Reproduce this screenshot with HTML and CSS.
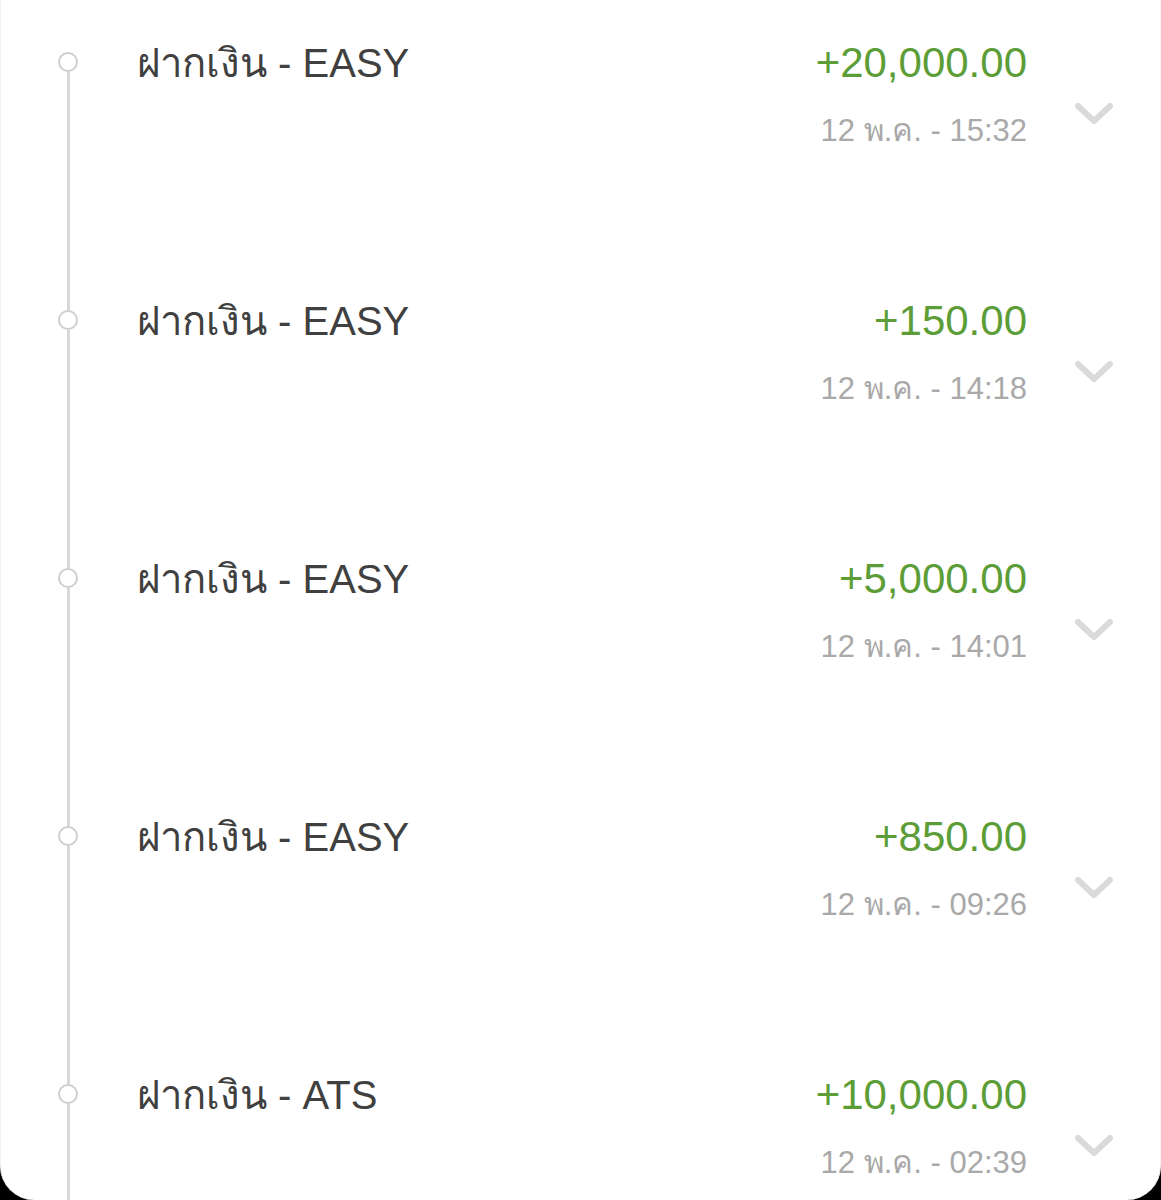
FILE: index.html
```html
<!DOCTYPE html>
<html lang="th">
<head>
    <meta charset="UTF-8">
    <meta name="viewport" content="width=device-width, initial-scale=1.0">
    <title>รายการเดินบัญชี</title>
    <link rel="stylesheet" href="styles.css">
</head>
<body>

    <div class="card">
        <!-- รายการฝากเงิน -->
        <ul class="tx-list">
            <li class="tx">
                <div class="tx-rail"><span class="tx-line tx-line-top"></span><span class="tx-dot"></span><span class="tx-line"></span></div>
                <div class="tx-title">ฝากเงิน - EASY</div>
                <div class="tx-money">
                    <div class="tx-amount">+20,000.00</div>
                    <div class="tx-date">12 พ.ค. - 15:32</div>
                </div>
                <div class="tx-toggle"><svg viewBox="0 0 40 26" width="40" height="26"><path d="M4 5 L20 20 L36 5" fill="none" stroke="#dadada" stroke-width="6" stroke-linecap="round" stroke-linejoin="round"/></svg></div>
            </li>
            <li class="tx">
                <div class="tx-rail"><span class="tx-line tx-line-top"></span><span class="tx-dot"></span><span class="tx-line"></span></div>
                <div class="tx-title">ฝากเงิน - EASY</div>
                <div class="tx-money">
                    <div class="tx-amount">+150.00</div>
                    <div class="tx-date">12 พ.ค. - 14:18</div>
                </div>
                <div class="tx-toggle"><svg viewBox="0 0 40 26" width="40" height="26"><path d="M4 5 L20 20 L36 5" fill="none" stroke="#dadada" stroke-width="6" stroke-linecap="round" stroke-linejoin="round"/></svg></div>
            </li>
            <li class="tx">
                <div class="tx-rail"><span class="tx-line tx-line-top"></span><span class="tx-dot"></span><span class="tx-line"></span></div>
                <div class="tx-title">ฝากเงิน - EASY</div>
                <div class="tx-money">
                    <div class="tx-amount">+5,000.00</div>
                    <div class="tx-date">12 พ.ค. - 14:01</div>
                </div>
                <div class="tx-toggle"><svg viewBox="0 0 40 26" width="40" height="26"><path d="M4 5 L20 20 L36 5" fill="none" stroke="#dadada" stroke-width="6" stroke-linecap="round" stroke-linejoin="round"/></svg></div>
            </li>
            <li class="tx">
                <div class="tx-rail"><span class="tx-line tx-line-top"></span><span class="tx-dot"></span><span class="tx-line"></span></div>
                <div class="tx-title">ฝากเงิน - EASY</div>
                <div class="tx-money">
                    <div class="tx-amount">+850.00</div>
                    <div class="tx-date">12 พ.ค. - 09:26</div>
                </div>
                <div class="tx-toggle"><svg viewBox="0 0 40 26" width="40" height="26"><path d="M4 5 L20 20 L36 5" fill="none" stroke="#dadada" stroke-width="6" stroke-linecap="round" stroke-linejoin="round"/></svg></div>
            </li>
            <li class="tx">
                <div class="tx-rail"><span class="tx-line tx-line-top"></span><span class="tx-dot"></span><span class="tx-line"></span></div>
                <div class="tx-title">ฝากเงิน - ATS</div>
                <div class="tx-money">
                    <div class="tx-amount">+10,000.00</div>
                    <div class="tx-date">12 พ.ค. - 02:39</div>
                </div>
                <div class="tx-toggle"><svg viewBox="0 0 40 26" width="40" height="26"><path d="M4 5 L20 20 L36 5" fill="none" stroke="#dadada" stroke-width="6" stroke-linecap="round" stroke-linejoin="round"/></svg></div>
            </li>
        </ul>
    </div>

</body>
</html>
```

FILE: styles.css
```css
/* หน้าโดยรวม */
body {
    margin: 0;
    padding: 0;
    background-color: #000;
    font-family: "Liberation Sans", Arial, sans-serif;
}

/* การ์ดสีขาว */
.card {
    background-color: #fff;
    height: 1200px;
    border-radius: 0 0 34px 34px;
    border-left: 1px solid #f2f2f2;
    border-right: 1px solid #f2f2f2;
    box-sizing: border-box;
    overflow: hidden;
}

.tx-list {
    list-style: none;
    margin: 0;
    padding: 0;
}

/* แต่ละรายการ */
.tx {
    display: grid;
    grid-template-columns: 136px 1fr auto 133px;
    height: 258px;
}

.tx:last-child {
    height: 430px;
}

.tx-rail {
    display: flex;
    flex-direction: column;
    align-items: center;
    padding-right: 2px;
}

.tx-line {
    width: 3px;
    flex: 1;
    background-color: #d8d8d8;
}

.tx-line-top {
    flex: none;
    height: 52px;
}

.tx:first-child .tx-line-top {
    visibility: hidden;
}

.tx-dot {
    width: 16px;
    height: 16px;
    border: 2.5px solid #cfcfcf;
    border-radius: 50%;
    flex: none;
}

.tx-title {
    padding-top: 39px;
    font-size: 40px;
    line-height: 48px;
    color: #404040;
}

.tx-money {
    padding-top: 39px;
    text-align: right;
}

.tx-amount {
    font-size: 42px;
    line-height: 48px;
    color: #5c9d38;
}

.tx-date {
    margin-top: 26px;
    font-size: 31px;
    line-height: 36px;
    color: #a9a9a9;
}

.tx-toggle {
    display: flex;
    justify-content: center;
    padding-top: 101px;
}

.tx-toggle svg {
    display: block;
}
```
